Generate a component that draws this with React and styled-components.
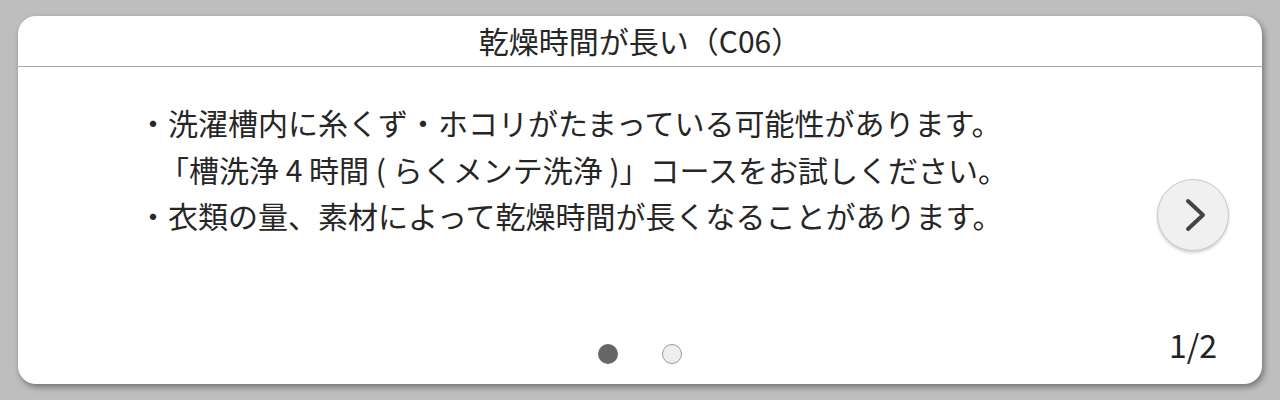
import React from "react";
import styled, { createGlobalStyle } from "styled-components";

const GlobalStyle = createGlobalStyle`
  html, body {
    margin: 0;
    padding: 0;
    background: #bebebe;
  }
  body {
    font-family: "Noto Sans CJK JP", "Noto Sans", sans-serif;
    color: #262626;
  }
`;

const Page = styled.div`
  width: 1280px;
  height: 400px;
  padding: 16px 18px;
  box-sizing: border-box;
`;

const Card = styled.section`
  width: 1244px;
  height: 368px;
  background: #fff;
  border-radius: 18px;
  box-shadow: 2px 3px 6px rgba(0, 0, 0, 0.4);
  display: flex;
  flex-direction: column;
  overflow: hidden;
`;

const Header = styled.header`
  height: 51px;
  border-bottom: 1px solid #aaaaaa;
  display: flex;
  align-items: center;
  justify-content: center;
  padding-bottom: 3px;
  box-sizing: border-box;
  flex-shrink: 0;
`;

const Title = styled.h1`
  margin: 0;
  font-size: 30px;
  font-weight: 400;
  line-height: 1;
  color: #262626;
`;

const Body = styled.div`
  flex: 1;
  display: flex;
  flex-direction: column;
`;

const Main = styled.div`
  display: flex;
  align-items: flex-start;
  padding: 32px 33px 0 120px;
`;

const List = styled.ul`
  flex: 1;
  margin: 0;
  padding: 0;
  list-style: none;
  font-size: 30px;
  line-height: 46.5px;
  color: #262626;
`;

const Item = styled.li`
  display: flex;
`;

const Bullet = styled.span`
  width: 30px;
  flex-shrink: 0;
`;

const Lines = styled.div`
  display: flex;
  flex-direction: column;
  white-space: nowrap;
`;

const Continued = styled.span`
  margin-left: ${(p) => p.$shift || 0}px;
`;

const NextButton = styled.button`
  margin-top: 80px;
  width: 72px;
  height: 72px;
  border-radius: 50%;
  border: 1.5px solid #c8c8c8;
  background: #f0f0f0;
  box-shadow: 0 2px 3px rgba(0, 0, 0, 0.18);
  display: flex;
  align-items: center;
  justify-content: center;
  padding: 0;
  flex-shrink: 0;
  cursor: pointer;
`;

const Footer = styled.footer`
  margin-top: auto;
  display: grid;
  grid-template-columns: 1fr auto 1fr;
  align-items: end;
  padding: 0 45px 20px;
`;

const Dots = styled.div`
  grid-column: 2;
  display: flex;
  gap: 44px;
`;

const Dot = styled.span`
  width: 20px;
  height: 20px;
  border-radius: 50%;
  box-sizing: border-box;
  background: ${(p) => (p.$active ? "#666666" : "#eeeeee")};
  border: ${(p) => (p.$active ? "none" : "1.5px solid #999999")};
`;

const PageCount = styled.span`
  grid-column: 3;
  justify-self: end;
  font-size: 32px;
  line-height: 32px;
  margin-bottom: 4px;
  color: #222;
`;

export default function App() {
  return (
    <>
      <GlobalStyle />
      <Page>
        <Card>
          <Header>
            <Title>乾燥時間が長い（C06）</Title>
          </Header>
          <Body>
            <Main>
              <List>
                <Item>
                  <Bullet>・</Bullet>
                  <Lines>
                    <span>洗濯槽内に糸くず・ホコリがたまっている可能性があります。</span>
                    <Continued $shift={-9}>「槽洗浄 4 時間 ( らくメンテ洗浄 )」コースをお試しください。</Continued>
                  </Lines>
                </Item>
                <Item>
                  <Bullet>・</Bullet>
                  <Lines>
                    <span>衣類の量、素材によって乾燥時間が長くなることがあります。</span>
                  </Lines>
                </Item>
              </List>
              <NextButton aria-label="次へ">
                <svg width="28" height="34" viewBox="0 0 28 34" fill="none">
                  <path
                    d="M9 3 L24 17 L9 31"
                    stroke="#444"
                    strokeWidth="4"
                    strokeLinecap="round"
                    strokeLinejoin="round"
                  />
                </svg>
              </NextButton>
            </Main>
            <Footer>
              <Dots>
                <Dot $active />
                <Dot />
              </Dots>
              <PageCount>1/2</PageCount>
            </Footer>
          </Body>
        </Card>
      </Page>
    </>
  );
}
